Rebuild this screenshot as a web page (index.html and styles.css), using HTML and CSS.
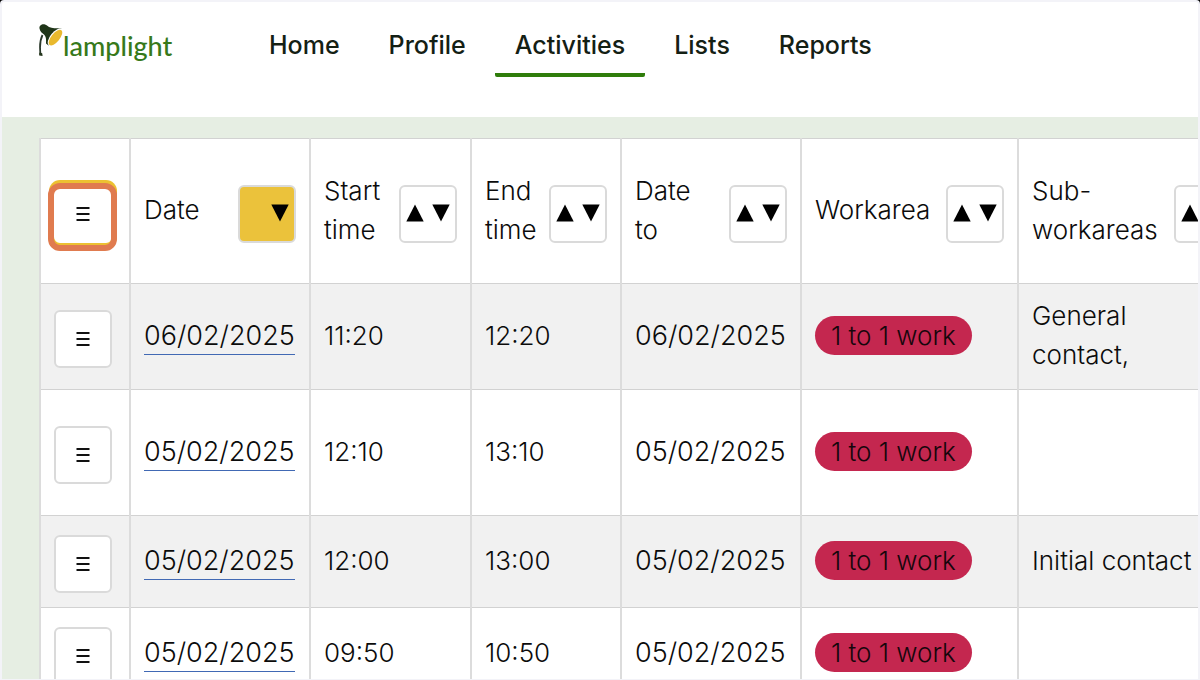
FILE: index.html
```html
<!DOCTYPE html>
<html lang="en">
<head>
<meta charset="utf-8">
<title>Lamplight – Activities</title>
<link rel="stylesheet" href="styles.css">
</head>
<body>
<svg class="sprite" aria-hidden="true">
  <symbol id="bars" viewBox="0 0 14 16"><path d="M0.5 2h13M0.5 8h13M0.5 14h13" stroke="#111" stroke-width="2" fill="none"/></symbol>
  <symbol id="up" viewBox="0 0 18 18"><path d="M9 0.5 17.7 17.5H0.3z"/></symbol>
  <symbol id="down" viewBox="0 0 18 18"><path d="M0.3 0.5h17.4L9 17.5z"/></symbol>
</svg>
<div class="frame">
  <header class="topbar">
    <a class="logo" href="#" aria-label="lamplight">
      <svg class="lamp" viewBox="0 0 25 35" aria-hidden="true">
        <path d="M4.500 12C2 17 1.500 24 2.600 32" fill="none" stroke="#2c3a2c" stroke-width="1.800"/>
        <path d="M1.200 29.500l3 .8.4 2.700-3.400-.4z" fill="#24351c"/>
        <path d="M1.500 5.500C1 2.500 3.600.8 6.400 1.200c1.800.3 2.600 1.500 4.600 2.700 3.200 1.600 7 .8 12.500 1.800L10.500 22.500 8 20.500C8 17 8.500 14.500 6.500 12 4 10 2 8.500 1.500 5.500z" fill="#1f3518"/>
        <ellipse cx="17.300" cy="14.200" rx="10.400" ry="4.900" transform="rotate(-51 17.300 14.200)" fill="#fff"/>
        <ellipse cx="17.500" cy="14.600" rx="9.400" ry="4.200" transform="rotate(-51 17.500 14.600)" fill="#e9b92e"/>
      </svg>
      <span class="brand">lamplight</span>
    </a>
    <nav class="nav">
      <a href="#">Home</a>
      <a href="#">Profile</a>
      <a href="#" class="current" aria-current="page">Activities</a>
      <a href="#">Lists</a>
      <a href="#">Reports</a>
    </nav>
  </header>
  <main class="content">
    <table class="grid">
      <colgroup>
        <col class="c-menu"><col class="c-date"><col class="c-start"><col class="c-end"><col class="c-to"><col class="c-area"><col class="c-sub">
      </colgroup>
      <thead>
        <tr>
          <th class="menu-cell"><button class="box focused" aria-label="Table menu"><svg class="bars"><use href="#bars"/></svg><span class="marker"></span></button></th>
          <th><div class="head"><span>Date</span><button class="box sort active" aria-label="Sort by date"><svg class="tri"></svg><svg class="tri"><use href="#down"/></svg></button></div></th>
          <th><div class="head"><span>Start time</span><button class="box sort" aria-label="Sort by start time"><svg class="tri"><use href="#up"/></svg><svg class="tri"><use href="#down"/></svg></button></div></th>
          <th><div class="head"><span>End time</span><button class="box sort" aria-label="Sort by end time"><svg class="tri"><use href="#up"/></svg><svg class="tri"><use href="#down"/></svg></button></div></th>
          <th><div class="head"><span>Date<br>to</span><button class="box sort" aria-label="Sort by date to"><svg class="tri"><use href="#up"/></svg><svg class="tri"><use href="#down"/></svg></button></div></th>
          <th><div class="head"><span>Workarea</span><button class="box sort" aria-label="Sort by workarea"><svg class="tri"><use href="#up"/></svg><svg class="tri"><use href="#down"/></svg></button></div></th>
          <th><div class="head"><span>Sub-<br>workareas</span><button class="box sort" aria-label="Sort by sub-workareas"><svg class="tri"><use href="#up"/></svg><svg class="tri"><use href="#down"/></svg></button></div></th>
        </tr>
      </thead>
      <tbody>
        <tr>
          <td class="menu-cell"><button class="box" aria-label="Row menu"><svg class="bars"><use href="#bars"/></svg></button></td>
          <td class="date"><a href="#">06/02/2025</a></td><td>11:20</td><td>12:20</td><td class="date">06/02/2025</td>
          <td><span class="pill">1 to 1 work</span></td><td>General<br>contact,</td>
        </tr>
        <tr class="roomy">
          <td class="menu-cell"><button class="box" aria-label="Row menu"><svg class="bars"><use href="#bars"/></svg></button></td>
          <td class="date"><a href="#">05/02/2025</a></td><td>12:10</td><td>13:10</td><td class="date">05/02/2025</td>
          <td><span class="pill">1 to 1 work</span></td><td></td>
        </tr>
        <tr>
          <td class="menu-cell"><button class="box" aria-label="Row menu"><svg class="bars"><use href="#bars"/></svg></button></td>
          <td class="date"><a href="#">05/02/2025</a></td><td>12:00</td><td>13:00</td><td class="date">05/02/2025</td>
          <td><span class="pill">1 to 1 work</span></td><td>Initial contact</td>
        </tr>
        <tr>
          <td class="menu-cell"><button class="box" aria-label="Row menu"><svg class="bars"><use href="#bars"/></svg></button></td>
          <td class="date"><a href="#">05/02/2025</a></td><td>09:50</td><td>10:50</td><td class="date">05/02/2025</td>
          <td><span class="pill">1 to 1 work</span></td><td></td>
        </tr>
      </tbody>
    </table>
  </main>
</div>
</body>
</html>
```
FILE: styles.css
```css
* { box-sizing: border-box; }
html { background: #000; }
body {
  margin: 0;
  height: 100vh;
  overflow: hidden;
  font-family: Inter, "Open Sans", sans-serif;
  color: #0b0b0b;
}
.sprite { display: none; }
.frame {
  height: 100vh;
  display: flex;
  flex-direction: column;
  overflow: hidden;
  border: 2px solid #f3f3f8;
  border-bottom-width: 1px;
  border-radius: 4px 4px 0 0;
  background: #fff;
}
.topbar {
  display: flex;
  align-items: flex-start;
  flex: none;
  height: 115px;
  padding-left: 36px;
}
.logo {
  display: flex;
  width: 211px;
  padding-top: 21px;
  text-decoration: none;
}
.lamp { width: 25px; height: 35px; }
.brand {
  padding-top: 7px;
  font: 500 27px/32px Lato, sans-serif;
  color: #37791a;
}
.nav { display: flex; gap: 9px; padding-top: 25px; }
.nav a {
  padding: 0 20px 10px;
  border-bottom: 4px solid transparent;
  border-radius: 2px;
  font-size: 25px;
  font-weight: 500;
  line-height: 36px;
  color: #142014;
  text-decoration: none;
}
.nav .current { border-bottom-color: #2f7d0b; }
.content {
  flex: 1;
  min-height: 0;
  overflow: hidden;
  padding: 21px 0 0 37px;
  background: #e6eee3;
}
.grid {
  width: 1206px;
  table-layout: fixed;
  border-collapse: collapse;
  background: #fff;
  font-size: 26px;
  font-weight: 300;
  line-height: 39px;
}
.c-menu { width: 90px; }
.c-date { width: 180px; }
.c-start { width: 161px; }
.c-end { width: 150px; }
.c-to { width: 180px; }
.c-area { width: 217px; }
.c-sub { width: 228px; }
.grid th, .grid td {
  padding: 0 13px 3px;
  border: 2px solid #dcdcdc;
  border-width: 1px 2px;
  border-top-color: #d2d2d2;
  border-bottom-color: #d2d2d2;
  font-weight: 300;
  text-align: left;
  vertical-align: middle;
}
.grid th { height: 145px; }
.grid td { height: 92px; }
.grid tbody tr:first-child td { height: 106px; }
.grid .roomy td { height: 126px; }
.grid tbody tr:nth-child(odd) { background: #f1f1f1; }
.grid .menu-cell { padding-top: 5px; padding-bottom: 0; }
.grid .date { font-size: 27px; }
.grid td a {
  padding-bottom: 2px;
  border-bottom: 1px solid #4169b4;
  color: inherit;
  text-decoration: none;
}
.head { display: flex; align-items: center; justify-content: space-between; }
.box {
  display: flex;
  align-items: center;
  justify-content: center;
  flex: none;
  width: 58px;
  height: 58px;
  padding: 0;
  border: 2px solid #dadada;
  border-radius: 6px;
  background: #fff;
}
.bars { width: 14px; height: 16px; }
.sort { gap: 8px; margin-top: 8px; padding-bottom: 2px; }
.tri { width: 18px; height: 18px; }
.active { background: #ebc23b; }
.focused {
  position: relative;
  border-color: #fff;
  box-shadow: 0 0 0 5px #ecc131;
}
.marker {
  position: absolute;
  top: -4px;
  left: -8px;
  width: 69px;
  height: 68px;
  border: 6px solid #e07b4f;
  border-radius: 12px;
}
.pill {
  display: block;
  width: max-content;
  padding: 0 16px;
  border-radius: 20px;
  background: #c4274f;
  color: #16060c;
}
```
